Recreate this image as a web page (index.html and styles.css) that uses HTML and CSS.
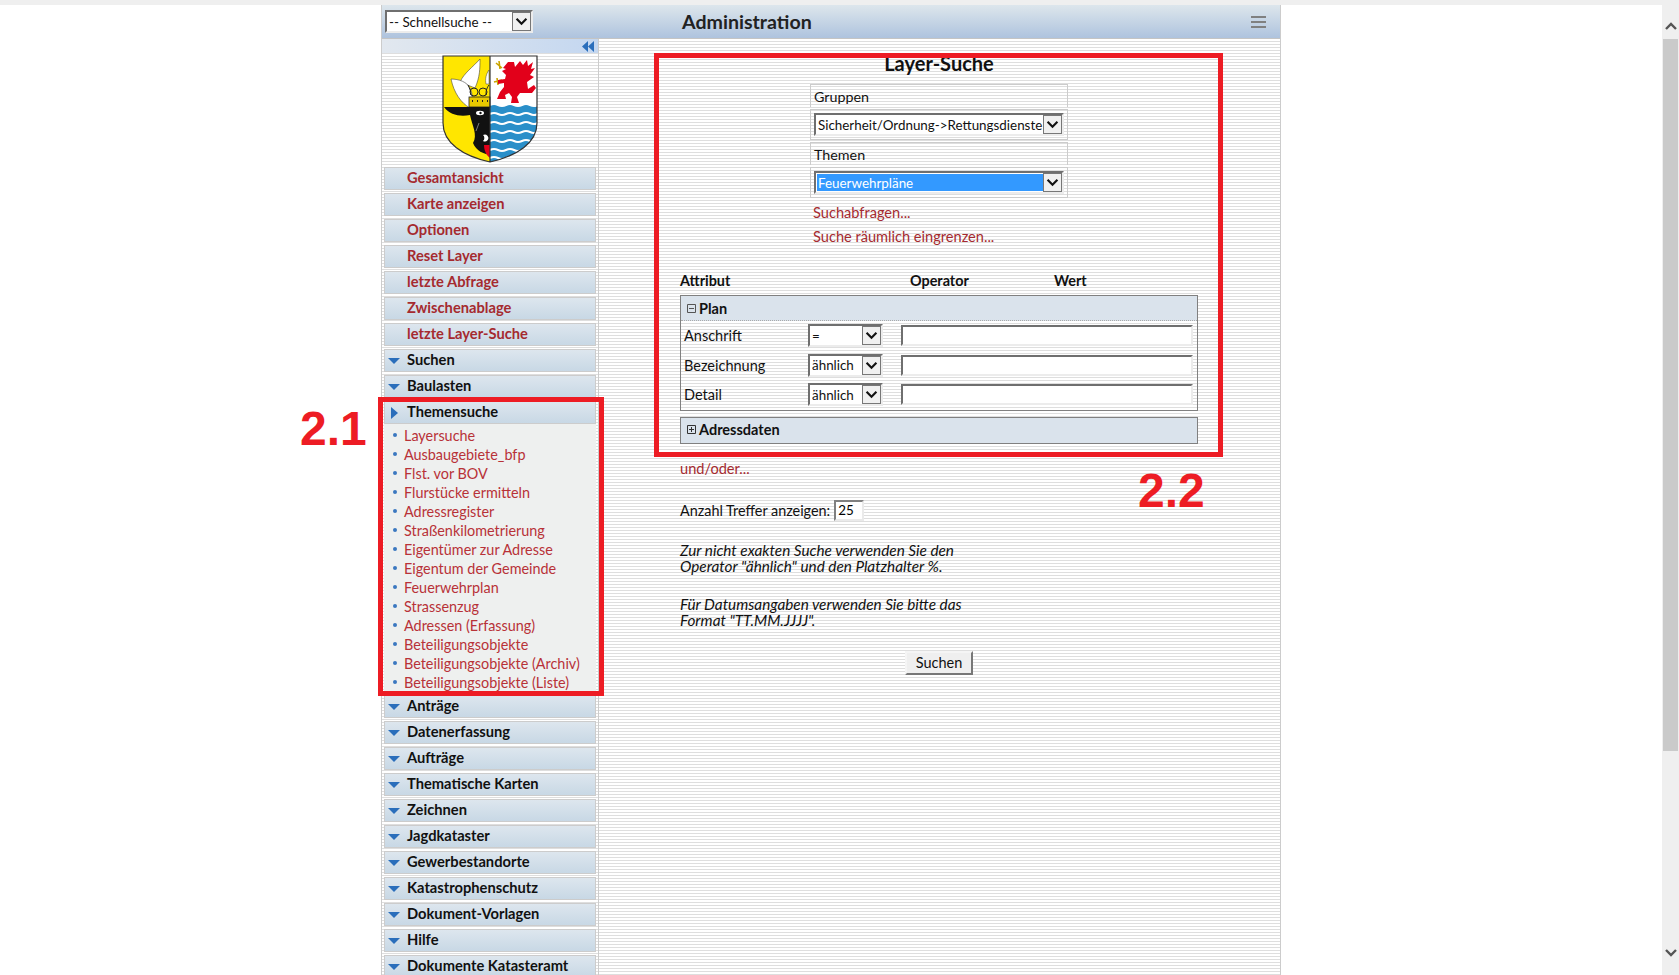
FILE: index.html
```html
<!DOCTYPE html>
<html lang="de">
<head>
<meta charset="utf-8">
<title>Administration</title>
<link rel="stylesheet" href="styles.css">
</head>
<body>
<div class="page">
  <div class="viewport">
    <div class="topstrip"></div>
    <div class="shell">
      <header class="head">
        <span class="sel sel-quick">
          <select><option>-- Schnellsuche --</option></select>
          <svg class="sel-btn" viewBox="0 0 19 19"><path d="M4 6.5 9.5 12 15 6.5" fill="none" stroke="#111" stroke-width="2.4"/></svg>
        </span>
        <h1 class="title">Administration</h1>
        <svg class="burger" viewBox="0 0 15 12"><path d="M0 1h15M0 6h15M0 11h15" stroke="#808080" stroke-width="2"/></svg>
      </header>
      <div class="cols">
        <nav class="side">
          <div class="collapse">
            <svg viewBox="0 0 12 11" class="collapse-ico"><path d="M6 0v11L0 5.5zM12 0v11L6 5.5z" fill="#2a6ebb"/></svg>
          </div>
          <div class="logo">
            <svg viewBox="0 0 96 108" class="crest">
              <defs><clipPath id="shield"><path d="M1 1H95V68C95 88 75 101 48 107C21 101 1 88 1 68Z"/></clipPath></defs>
              <g clip-path="url(#shield)">
                <rect width="48" height="108" fill="#ffe600"/>
                <rect x="48" width="48" height="50" fill="#fff"/>
                <rect x="48" y="50" width="48" height="58" fill="#2a8fc9"/>
                <g fill="none" stroke="#fff" stroke-width="2">
                  <path d="M48 50q4-2 8 0t8 0 8 0 8 0 8 0 8 0"/>
                  <path d="M48 59q4-2 8 0t8 0 8 0 8 0 8 0 8 0"/>
                  <path d="M48 68q4-2 8 0t8 0 8 0 8 0 8 0 8 0"/>
                  <path d="M48 77q4-2 8 0t8 0 8 0 8 0 8 0 8 0"/>
                  <path d="M48 86q4-2 8 0t8 0 8 0 8 0 8 0 8 0"/>
                  <path d="M48 95q4-2 8 0t8 0 8 0 8 0 8 0 8 0"/>
                  <path d="M48 103q4-2 8 0t8 0 8 0 8 0 8 0 8 0"/>
                </g>
                <path d="M38 4C38 13 38 22 33 33L18 27C22 18 31 12 38 4Z" fill="#fff" stroke="#444" stroke-width=".6"/>
                <path d="M9 24C17 24 25 27 28 33C31 39 31 46 28 53C19 48 12 38 9 24Z" fill="#fff" stroke="#444" stroke-width=".6"/>
                <path d="M47 15C44 19 43 24 44 29H47Z" fill="#fff" stroke="#444" stroke-width=".5"/>
                <g fill="none" stroke="#222" stroke-width="1">
                  <circle cx="32" cy="37" r="4"/><circle cx="41" cy="37" r="4"/><path d="M26 30c2 4 3 7 3 10M47 30c-3 4-3 7-3 10"/>
                </g>
                <rect x="27" y="42" width="21" height="10" fill="#e8c800" stroke="#222" stroke-width=".8"/>
                <path d="M30 46h1M35 46h1M40 46h1M45 46h1" stroke="#222" stroke-width="2"/>
                <path d="M2 52H48V100C42 99 34 96 31 88C36 80 30 70 28 60C18 62 8 60 2 52Z" fill="#111"/>
                <path d="M42 90H48V103C44 100 42 95 42 90Z" fill="#e2001a"/>
                <ellipse cx="38" cy="58" rx="4" ry="2.2" fill="#fff"/><circle cx="38.5" cy="58" r="1.2" fill="#111"/>
                <path d="M37 68 34 76" stroke="#aaa" stroke-width=".7"/>
                <path d="M41 80a3.5 3.5 0 1 1 0 6 4 4 0 0 0 0-6Z" fill="#fff"/>
                <path d="M54 8 60 13M57 6 58 14M52 27 60 25M55 23 56 30" stroke="#c9a400" stroke-width="1.6"/>
                <path d="M61 13 66 7 72 7 73 12 78 6 81 10 85 5 86 11 91 7 89 14 93 13 88 20 92 22 85 27 86 34 92 30 94 33 90 38 83 38 78 38 75 42 77 48 69 48 70 42 67 38 63 40 64 44 55 44 58 37 62 32 62 28 56 29 56 25 63 24 64 20 60 16 64 14Z" fill="#e2001a"/>
              </g>
              <path d="M1 1H95V68C95 88 75 101 48 107C21 101 1 88 1 68Z M48 1V107" fill="none" stroke="#333" stroke-width="1.2"/>
            </svg>
          </div>
          <a class="item">Gesamtansicht</a>
          <a class="item">Karte anzeigen</a>
          <a class="item">Optionen</a>
          <a class="item">Reset Layer</a>
          <a class="item">letzte Abfrage</a>
          <a class="item">Zwischenablage</a>
          <a class="item">letzte Layer-Suche</a>
          <a class="item group"><i class="tri"></i>Suchen</a>
          <a class="item group"><i class="tri"></i>Baulasten</a>
          <a class="item group open"><i class="tri-r"></i>Themensuche</a>
          <ul class="sub">
            <li>Layersuche</li>
            <li>Ausbaugebiete_bfp</li>
            <li>Flst. vor BOV</li>
            <li>Flurstücke ermitteln</li>
            <li>Adressregister</li>
            <li>Straßenkilometrierung</li>
            <li>Eigentümer zur Adresse</li>
            <li>Eigentum der Gemeinde</li>
            <li>Feuerwehrplan</li>
            <li>Strassenzug</li>
            <li>Adressen (Erfassung)</li>
            <li>Beteiligungsobjekte</li>
            <li>Beteiligungsobjekte (Archiv)</li>
            <li>Beteiligungsobjekte (Liste)</li>
          </ul>
          <a class="item group"><i class="tri"></i>Anträge</a>
          <a class="item group"><i class="tri"></i>Datenerfassung</a>
          <a class="item group"><i class="tri"></i>Aufträge</a>
          <a class="item group"><i class="tri"></i>Thematische Karten</a>
          <a class="item group"><i class="tri"></i>Zeichnen</a>
          <a class="item group"><i class="tri"></i>Jagdkataster</a>
          <a class="item group"><i class="tri"></i>Gewerbestandorte</a>
          <a class="item group"><i class="tri"></i>Katastrophenschutz</a>
          <a class="item group"><i class="tri"></i>Dokument-Vorlagen</a>
          <a class="item group"><i class="tri"></i>Hilfe</a>
          <a class="item group"><i class="tri"></i>Dokumente Katasteramt</a>
        </nav>
        <main class="content">
          <div class="form">
            <h2 class="form-title">Layer-Suche</h2>
            <div class="pick">
              <div class="cell-label">Gruppen</div>
              <div class="cell-sel">
                <span class="sel sel-wide">
                  <select><option>Sicherheit/Ordnung-&gt;Rettungsdienste</option></select>
                  <svg class="sel-btn" viewBox="0 0 19 19"><path d="M4 6.5 9.5 12 15 6.5" fill="none" stroke="#111" stroke-width="2.4"/></svg>
                </span>
              </div>
              <div class="cell-label">Themen</div>
              <div class="cell-sel">
                <span class="sel sel-wide sel-active">
                  <select><option>Feuerwehrpläne</option></select>
                  <svg class="sel-btn" viewBox="0 0 19 19"><path d="M4 6.5 9.5 12 15 6.5" fill="none" stroke="#111" stroke-width="2.4"/></svg>
                </span>
              </div>
              <a class="link link-a">Suchabfragen...</a>
              <a class="link link-b">Suche räumlich eingrenzen...</a>
            </div>
            <div class="cols-head">
              <span class="ch-a">Attribut</span><span class="ch-b">Operator</span><span>Wert</span>
            </div>
            <section class="panel">
              <div class="panel-head dotted"><svg class="pm" viewBox="0 0 9 9"><path d="M.5.5h8v8h-8zM2 4.5h5" fill="none" stroke="#555"/></svg>Plan</div>
              <div class="row">
                <label>Anschrift</label>
                <span class="sel sel-op"><select><option>=</option></select><svg class="sel-btn" viewBox="0 0 19 19"><path d="M4 6.5 9.5 12 15 6.5" fill="none" stroke="#111" stroke-width="2.4"/></svg></span>
                <input class="val" type="text">
              </div>
              <div class="row">
                <label>Bezeichnung</label>
                <span class="sel sel-op"><select><option>ähnlich</option></select><svg class="sel-btn" viewBox="0 0 19 19"><path d="M4 6.5 9.5 12 15 6.5" fill="none" stroke="#111" stroke-width="2.4"/></svg></span>
                <input class="val" type="text">
              </div>
              <div class="row">
                <label>Detail</label>
                <span class="sel sel-op"><select><option>ähnlich</option></select><svg class="sel-btn" viewBox="0 0 19 19"><path d="M4 6.5 9.5 12 15 6.5" fill="none" stroke="#111" stroke-width="2.4"/></svg></span>
                <input class="val" type="text">
              </div>
            </section>
            <section class="panel panel-closed">
              <div class="panel-head"><svg class="pm" viewBox="0 0 9 9"><path d="M.5.5h8v8h-8zM2 4.5h5M4.5 2v5" fill="none" stroke="#333"/></svg>Adressdaten</div>
            </section>
            <a class="link undoder">und/oder...</a>
            <div class="hits">Anzahl Treffer anzeigen: <input class="hits-in" type="text" value="25"></div>
            <p class="hint hint-a">Zur nicht exakten Suche verwenden Sie den<br>Operator "ähnlich" und den Platzhalter %.</p>
            <p class="hint hint-b">Für Datumsangaben verwenden Sie bitte das<br>Format "TT.MM.JJJJ".</p>
            <div class="actions"><button class="btn" type="button">Suchen</button></div>
          </div>
        </main>
      </div>
    </div>
  </div>
  <aside class="scrollbar">
    <svg class="sb-ar" viewBox="0 0 12 8"><path d="M1 7 6 2l5 5" fill="none" stroke="#555" stroke-width="2.4"/></svg>
    <div class="sb-thumb"></div>
    <svg class="sb-ar sb-down" viewBox="0 0 12 8"><path d="M1 1l5 5 5-5" fill="none" stroke="#555" stroke-width="2.4"/></svg>
  </aside>
  <div class="mark mark-1"></div>
  <div class="mark mark-2"></div>
  <div class="mark-label label-1">2.1</div>
  <div class="mark-label label-2">2.2</div>
</div>
</body>
</html>
```
FILE: styles.css
```css
* { box-sizing: border-box; }
html, body { margin: 0; height: 100%; overflow: hidden; background: #fff; }
body { font-family: Lato, "Open Sans", sans-serif; font-size: 14.5px; color: #111; }
.page { position: relative; display: flex; height: 975px; overflow: hidden; }
.viewport { flex: 1; min-width: 0; }
.topstrip { height: 5px; background: #efefef; }

.shell { width: 900px; margin: 0 auto; border-left: 1px solid #ccc; border-right: 1px solid #ccc; }
.head { height: 34px; display: flex; align-items: center; padding: 0 14px 0 3px; background: linear-gradient(#dde6ec, #aec3de); border-bottom: 1px solid #c4c4c4; }
.title { margin: 0 0 0 149px; font-size: 19.6px; font-weight: 700; line-height: 24px; color: #222; flex: 1; }
.burger { width: 15px; height: 12px; }

.sel { position: relative; display: inline-block; vertical-align: top; }
.sel select { appearance: none; -webkit-appearance: none; display: block; width: 100%; height: 100%; padding: 0 0 0 2px; margin: 0; border: 2px solid; border-color: #6f6f6f #ececec #ececec #6f6f6f; border-radius: 0; background: #fff; font: inherit; font-size: 13.4px; color: #111; }
.sel-btn { position: absolute; right: 2px; top: 2px; bottom: 2px; width: 19px; height: calc(100% - 4px); background: #f0f0f0; border: 1px solid #777; pointer-events: none; }
.sel-quick { width: 148px; height: 23px; }
.sel-wide { width: 250px; height: 23px; }
.sel-active select { background: #3399ff; color: #fff; box-shadow: inset 0 0 0 1px #fff; }
.sel-op { width: 75px; height: 23px; }

.cols { display: flex; }
.side { width: 217px; flex: none; height: 940px; border-right: 1px solid #ccc; background: repeating-linear-gradient(#fff 0 2px, #dedede 2px 3px); }
.collapse { height: 14px; display: flex; justify-content: flex-end; align-items: center; padding-right: 4px; background: linear-gradient(90deg, #e2e8ef, #c4d7f0); }
.collapse-ico { width: 12px; height: 11px; }
.logo { height: 114px; padding: 2px 0 0 60px; }
.crest { display: block; width: 96px; height: 108px; }

.item { display: flex; align-items: center; height: 23px; margin: 0 2px 3px; padding: 0 0 3px 22px; border: 1px solid #ccc; background: linear-gradient(#dde6ee, #c8d8e5); color: #a52a2f; font-weight: 700; font-size: 14.7px; line-height: 18px; }
.group { position: relative; color: #111; }
.tri { position: absolute; left: 3px; top: 8px; width: 0; height: 0; border-left: 6px solid transparent; border-right: 6px solid transparent; border-top: 6px solid #2a6ebb; }
.tri-r { position: absolute; left: 6px; top: 5px; width: 0; height: 0; border-top: 6px solid transparent; border-bottom: 6px solid transparent; border-left: 7px solid #2a6ebb; }
.open { margin-bottom: 0; }
.sub { list-style: none; margin: 0 2px 2px; padding: 2px 0 1px; background: #eef0ef; }
.sub li { position: relative; height: 19px; line-height: 19px; padding-left: 20px; color: #b83238; font-size: 14.4px; }
.sub li::before { content: ""; position: absolute; left: 9px; top: 7px; width: 4px; height: 4px; border-radius: 50%; background: #3a78c0; }

.content { flex: 1; height: 940px; padding: 14px 0 0 81px; background: repeating-linear-gradient(#fff 0 2px, #dedede 2px 3px); }
.form { width: 518px; }
.form-title { margin: 0 0 11px; text-align: center; font-size: 20px; line-height: 20px; font-weight: 700; color: #111; }
.pick { width: 258px; margin: 0 auto; }
.cell-label { height: 23px; margin-bottom: 2px; padding-left: 3px; border: 1px solid #ccc; border-bottom: 0; line-height: 24px; font-size: 14.3px; }
.cell-sel { height: 31px; margin-bottom: 2px; padding: 3px 0 0 3px; border: 1px solid #ccc; }
.link { display: block; color: #a52a2f; line-height: 20px; font-size: 14.6px; }
.link-a { margin: 5px 0 0 3px; }
.link-b { margin: 4px 0 0 3px; }
.cols-head { display: flex; margin-top: 24px; font-weight: 700; line-height: 20px; height: 24px; color: #111; font-size: 14.4px; }
.ch-a { width: 230px; }
.ch-b { width: 144px; }

.panel { border: 1px solid #808080; }
.panel-head { display: flex; align-items: center; height: 25px; padding: 1px 0 0 6px; background: #dae3ec; font-weight: 700; color: #111; }
.dotted { border-bottom: 1px dotted #aaa; }
.panel-closed { margin-top: 6px; }
.panel-closed .panel-head { height: 25px; padding: 0 0 2px 6px; }
.pm { width: 9px; height: 9px; margin-right: 3px; }
.row { display: flex; align-items: center; height: 29.5px; padding-left: 3px; }
.row label { width: 124px; }
.val { width: 292px; height: 21px; margin-left: 18px; padding: 0 2px; border: 2px solid; border-color: #6f6f6f #ececec #ececec #6f6f6f; background: #fff; }

.undoder { margin-top: 15px; }
.hits { margin-top: 21px; line-height: 21px; display: flex; gap: 4px; font-size: 14.4px; }
.hits-in { width: 30px; height: 21px; padding: 0 2px; border: 2px solid; border-color: #808080 #eaeaea #eaeaea #808080; background: #fff; font: inherit; font-size: 13.4px; }
.hint { margin: 0; font-style: italic; line-height: 16px; color: #111; font-size: 15.3px; }
.hint-a { margin-top: 21px; }
.hint-b { margin-top: 22px; }
.actions { margin-top: 23px; text-align: center; }
.btn { width: 68px; height: 24px; padding: 0; border: 2px solid; border-color: #f5f5f5 #777 #777 #f5f5f5; background: #efefef; font: inherit; color: #111; }

.scrollbar { width: 17px; flex: none; background: #efefef; display: flex; flex-direction: column; align-items: center; }
.sb-ar { width: 12px; height: 8px; margin-top: 22px; flex: none; }
.sb-thumb { width: 15px; height: 712px; margin-top: 9px; background: #cacaca; flex: none; }
.sb-down { margin-top: 198px; }

.mark { position: absolute; border: 5px solid #ed1c24; pointer-events: none; }
.mark-1 { left: 378px; top: 397px; width: 226px; height: 299px; }
.mark-2 { left: 654px; top: 53px; width: 569px; height: 404px; }
.mark-label { position: absolute; font-family: "Liberation Sans", Arial, sans-serif; font-weight: 700; font-size: 48px; line-height: 50px; color: #ed1c24; }
.label-1 { left: 300px; top: 404px; }
.label-2 { left: 1138px; top: 466px; }
```
